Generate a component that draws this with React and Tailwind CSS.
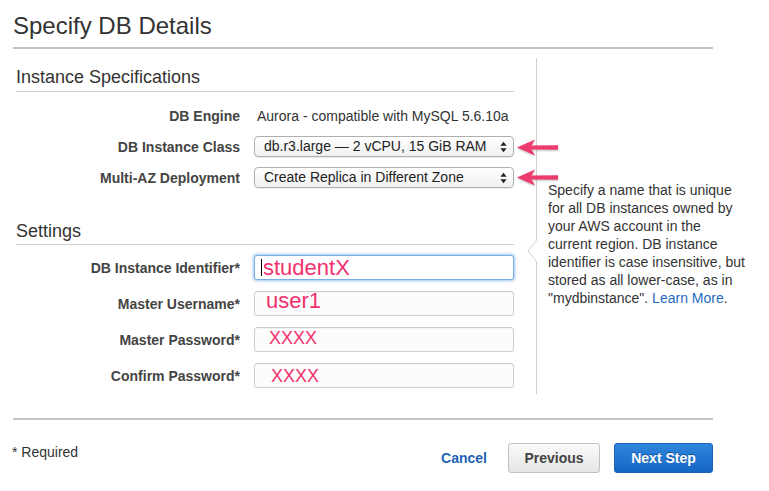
export default function App() {
  return (
    <div className="min-h-[491px] w-[769px] bg-white font-['Liberation_Sans',Arial,sans-serif] text-[#333] relative">
      <div className="ml-[13px] w-[700px]">
        <h1 className="pt-[12px] text-[24px] leading-[28px] text-[#333]">Specify DB Details</h1>
        <div className="mt-[7px] h-[2px] bg-[#c4c4c4]" />

        <div className="mt-[9px] flex">
          {/* left column */}
          <div className="w-[523px] pl-[3px] pr-[22px] pb-[6px]">
            <div className="mt-[7px] border-b border-[#cfcfcf] pb-[2px] text-[18px] leading-[24px] text-[#333]">
              Instance Specifications
            </div>

            <div className="mt-[14px] flex h-[20px] items-center">
              <Label>DB Engine</Label>
              <div className="ml-[17px] text-[14px] text-[#333]">Aurora - compatible with MySQL 5.6.10a</div>
            </div>

            <div className="mt-[10px] flex items-center">
              <Label>DB Instance Class</Label>
              <Select>db.r3.large — 2 vCPU, 15 GiB RAM</Select>
            </div>

            <div className="mt-[10px] flex items-center">
              <Label>Multi-AZ Deployment</Label>
              <Select>Create Replica in Different Zone</Select>
            </div>

            <div className="mt-[31px] border-b border-[#cfcfcf] pb-[1px] text-[18px] leading-[24px] text-[#333]">
              Settings
            </div>

            <div className="mt-[10px] flex items-center">
              <Label>DB Instance Identifier*</Label>
              <div className="ml-[14px] flex h-[25px] w-[260px] items-center rounded-[3px] border border-[#7aaee8] bg-white pl-[6px] shadow-[0_0_3px_1px_rgba(80,150,230,0.55)]">
                <span className="h-[17px] w-px bg-black" />
                <span className="ml-[1px] text-[22px] leading-[25px] text-[#f2306d]">studentX</span>
              </div>
            </div>

            <div className="mt-[11px] flex items-center">
              <Label>Master Username*</Label>
              <Input className="pl-[11px] text-[22px] -translate-y-[3px]">user1</Input>
            </div>

            <div className="mt-[11px] flex items-center">
              <Label>Master Password*</Label>
              <Input className="pl-[14px] text-[18px] -translate-y-[1px]">XXXX</Input>
            </div>

            <div className="mt-[11px] flex items-center">
              <Label>Confirm Password*</Label>
              <Input className="pl-[16px] text-[18px] translate-y-[1px]">XXXX</Input>
            </div>
          </div>

          {/* right column: help popover */}
          <div className="relative flex-1 border-l border-[#cfcfcf] pl-[11px] pt-[123px]">
            <svg className="absolute left-[-10px] top-[181px]" width="11" height="24" viewBox="0 0 11 24">
              <polygon points="10.5,0 1,12 10.5,24" fill="#ffffff" />
              <polyline points="10.5,0 1,12 10.5,24" fill="none" stroke="#d4d4d4" strokeWidth="1" />
            </svg>
            <p className="w-[200px] text-[14px] leading-[18px] text-[#333]">
              Specify a name that is unique for all DB instances owned by your AWS account in the current region. DB instance identifier is case insensitive, but stored as all lower-case, as in "mydbinstance".{" "}
              <span className="whitespace-nowrap"><span className="text-[#1f6cc0]">Learn More</span>.</span>
            </p>
          </div>
        </div>

        <div className="mt-[24px] h-[2px] bg-[#c4c4c4]" />

        <div className="flex items-start justify-between">
          <div className="mt-[22px] ml-[-1px] text-[14px] leading-[20px] text-[#333]">* Required</div>
          <div className="mt-[23px] flex items-center">
            <span className="text-[14px] font-bold text-[#1e63b3]">Cancel</span>
            <button className="ml-[21px] h-[30px] w-[92px] rounded-[3px] border border-[#c2c2c2] bg-linear-to-b from-[#fafafa] to-[#e6e6e6] text-[14px] font-bold text-[#444]">
              Previous
            </button>
            <button className="ml-[14px] h-[30px] w-[99px] rounded-[3px] border border-[#1a62b8] bg-linear-to-b from-[#2f86dc] to-[#1566c4] text-[14px] font-bold text-white [text-shadow:0_-1px_0_rgba(0,0,0,0.35)]">
              Next Step
            </button>
          </div>
        </div>
      </div>

      {/* annotation arrows */}
      <Arrow className="absolute left-[516px] top-[138px]" />
      <Arrow className="absolute left-[516px] top-[168px]" />
    </div>
  );
}

function Label({ children }) {
  return (
    <div className="w-[224px] shrink-0 text-right text-[14px] font-bold leading-[20px] text-[#444]">{children}</div>
  );
}

function Select({ children }) {
  return (
    <div className="ml-[14px] flex h-[21px] w-[260px] items-center justify-between rounded-[4px] border border-[#b0b0b0] bg-linear-to-b from-white to-[#f0f0f0] pl-[9px] pr-[6px] text-[14px] text-[#222] shadow-[0_1px_1px_rgba(0,0,0,0.08)]">
      <span>{children}</span>
      <svg width="7" height="12" viewBox="0 0 7 12">
        <path d="M3.5 0.8 L6.6 4.8 H0.4 Z M3.5 11.2 L6.6 7.2 H0.4 Z" fill="#222" />
      </svg>
    </div>
  );
}

function Input({ children, className }) {
  return (
    <div className="ml-[14px] flex h-[25px] w-[260px] items-center rounded-[3px] border border-[#cdcdcd] bg-[#fcfcfc] shadow-[inset_0_1px_1px_rgba(0,0,0,0.04)]">
      <span className={"leading-[25px] text-[#f2306d] " + className}>{children}</span>
    </div>
  );
}

function Arrow({ className }) {
  return (
    <svg className={className + " drop-shadow-[0_1px_1px_rgba(0,0,0,0.25)]"} width="43" height="19" viewBox="0 0 43 19">
      <polygon points="1,9.5 19,1.5 15.5,7.5 42,7.3 42,11.7 15.5,11.5 19,17.5" fill="#ee3b6e" />
    </svg>
  );
}
